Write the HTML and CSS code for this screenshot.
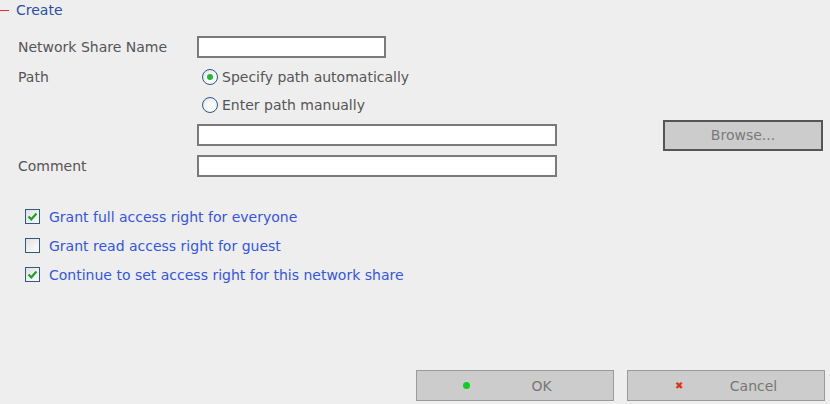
FILE: index.html
```html
<!DOCTYPE html>
<html lang="en">
  <head>
    <meta charset="UTF-8" />
    <title>Create Network Share</title>
    <link rel="stylesheet" href="styles.css">
  </head>
  <body>
    <div class="panel">
      <div class="panel-title">
        <span class="dash"></span>
        <span class="title-text">Create</span>
      </div>

      <div class="form">
        <div class="row name-row">
          <label class="label">Network Share Name</label>
          <input class="field short" type="text" />
        </div>
        <div class="row">
          <span class="label">Path</span>
          <label class="radio-line">
            <span class="radio checked"></span>
            <span>Specify path automatically</span>
          </label>
        </div>
        <div class="row">
          <span class="label"></span>
          <label class="radio-line">
            <span class="radio"></span>
            <span>Enter path manually</span>
          </label>
        </div>
        <div class="row path-row">
          <span class="label"></span>
          <input class="field long" type="text" />
          <button class="browse">Browse...</button>
        </div>
        <div class="row comment-row">
          <label class="label">Comment</label>
          <input class="field long" type="text" />
        </div>
      </div>

      <div class="checks">
        <label class="check-line">
          <span class="check checked">
            <svg viewBox="0 0 11 11" width="11" height="11"><path d="M1.5 5.5 L4.3 8.3 L9.5 2.5" fill="none" stroke="#20a030" stroke-width="2.2"/></svg>
          </span>
          <span>Grant full access right for everyone</span>
        </label>
        <label class="check-line">
          <span class="check"></span>
          <span>Grant read access right for guest</span>
        </label>
        <label class="check-line">
          <span class="check checked">
            <svg viewBox="0 0 11 11" width="11" height="11"><path d="M1.5 5.5 L4.3 8.3 L9.5 2.5" fill="none" stroke="#20a030" stroke-width="2.2"/></svg>
          </span>
          <span>Continue to set access right for this network share</span>
        </label>
      </div>

      <div class="footer">
        <button class="action">
          <span class="dot"></span>
          <span class="action-text">OK</span>
        </button>
        <button class="action">
          <span class="cross">&#x2716;</span>
          <span class="action-text">Cancel</span>
        </button>
      </div>
    </div>
  </body>
</html>
```

FILE: styles.css
```css
* {
  margin: 0;
  padding: 0;
  box-sizing: border-box;
}

body {
  background-color: #eeeeee;
  font-family: "DejaVu Sans", sans-serif;
  font-size: 14px;
  color: #555555;
  overflow: hidden;
}

.panel {
  height: 404px;
  display: flex;
  flex-direction: column;
}

/* Title */

.panel-title {
  display: flex;
  align-items: center;
  height: 20px;
}

.dash {
  width: 9px;
  height: 1px;
  background-color: #e03020;
  margin-right: 7px;
}

.title-text {
  color: #2a4ea6;
  font-size: 14px;
}

/* Form */

.form {
  display: flex;
  flex-direction: column;
  padding: 13px 0 0 18px;
}

.row {
  display: flex;
  align-items: center;
  height: 28px;
}

.name-row {
  margin-bottom: 2px;
}

.label {
  width: 179px;
  flex-shrink: 0;
}

.field {
  height: 22px;
  border: 2px solid #7a7a7a;
  background-color: #ffffff;
  outline: none;
}

.field.short {
  width: 189px;
}

.field.long {
  width: 360px;
}

.radio-line {
  display: flex;
  align-items: center;
  gap: 4px;
  padding-left: 5px;
}

.radio {
  width: 16px;
  height: 16px;
  border-radius: 50%;
  border: 1px solid #2d5a88;
  background: radial-gradient(circle at 60% 60%, #ffffff 30%, #d8d8d8 100%);
  display: flex;
  align-items: center;
  justify-content: center;
}

.radio.checked::after {
  content: "";
  width: 6px;
  height: 6px;
  border-radius: 50%;
  background-color: #22b832;
}

.path-row {
  height: 32px;
}

.browse {
  margin-left: 106px;
  width: 160px;
  height: 31px;
  background-color: #cccccc;
  border: 2px solid #555555;
  color: #7a7a7a;
  font-family: inherit;
  font-size: 14px;
}

.comment-row {
  margin-top: 1px;
}

/* Checkboxes */

.checks {
  display: flex;
  flex-direction: column;
  gap: 10px;
  padding: 27px 0 0 25px;
}

.check-line {
  display: flex;
  align-items: center;
  gap: 9px;
  color: #3355e8;
  font-size: 14px;
  height: 19px;
}

.check {
  width: 15px;
  height: 15px;
  border: 1px solid #2f5a84;
  background: linear-gradient(135deg, #e0e0e0, #ffffff);
  display: flex;
  align-items: center;
  justify-content: center;
}

/* Footer buttons */

.footer {
  margin-top: auto;
  display: flex;
  justify-content: flex-end;
  gap: 13px;
  padding: 0 5px 3px 0;
}

.action {
  width: 198px;
  height: 31px;
  background-color: #cccccc;
  border: 1px solid #9a9a9a;
  display: flex;
  align-items: center;
  font-family: inherit;
  font-size: 14px;
  color: #777777;
}

.dot {
  width: 7px;
  height: 7px;
  border-radius: 50%;
  background-color: #11cc22;
  margin-left: 46px;
}

.cross {
  color: #dd3311;
  font-size: 10px;
  margin-left: 47px;
  width: 8px;
}

.action-text {
  flex: 1;
  text-align: center;
}
```
